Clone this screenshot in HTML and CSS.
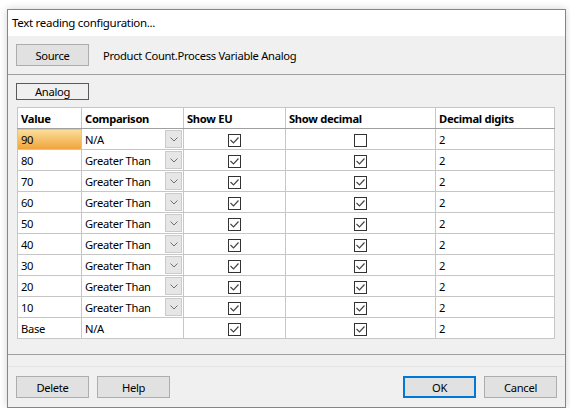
FILE: index.html
```html
<!DOCTYPE html>
<html lang="en">
<head>
  <meta charset="UTF-8" />
  <title>Text reading configuration...</title>
  <link rel="stylesheet" href="styles.css">
</head>
<body>

<div class="window">
  <div class="titlebar">Text reading configuration...</div>

  <div class="source-bar">
    <button class="btn">Source</button>
    <span class="source-name">Product Count.Process Variable Analog</span>
  </div>

  <div class="content">
    <button class="tab-btn">Analog</button>

    <table class="grid">
      <colgroup>
        <col class="c-value">
        <col class="c-comp">
        <col class="c-eu">
        <col class="c-dec">
        <col class="c-digits">
      </colgroup>
      <thead>
        <tr>
          <th>Value</th>
          <th>Comparison</th>
          <th>Show EU</th>
          <th>Show decimal</th>
          <th>Decimal digits</th>
        </tr>
      </thead>
      <tbody>
        <tr>
          <td class="selected">90</td>
          <td><div class="combo"><span>N/A</span><span class="drop"><svg width="8" height="5" viewBox="0 0 8 5"><polyline points="0.5,0.5 4,4 7.5,0.5" fill="none" stroke="#707070" stroke-width="1"/></svg></span></div></td>
          <td class="center"><span class="check on"></span></td>
          <td class="center"><span class="check"></span></td>
          <td>2</td>
        </tr>
        <tr>
          <td>80</td>
          <td><div class="combo"><span>Greater Than</span><span class="drop"><svg width="8" height="5" viewBox="0 0 8 5"><polyline points="0.5,0.5 4,4 7.5,0.5" fill="none" stroke="#707070" stroke-width="1"/></svg></span></div></td>
          <td class="center"><span class="check on"></span></td>
          <td class="center"><span class="check on"></span></td>
          <td>2</td>
        </tr>
        <tr>
          <td>70</td>
          <td><div class="combo"><span>Greater Than</span><span class="drop"><svg width="8" height="5" viewBox="0 0 8 5"><polyline points="0.5,0.5 4,4 7.5,0.5" fill="none" stroke="#707070" stroke-width="1"/></svg></span></div></td>
          <td class="center"><span class="check on"></span></td>
          <td class="center"><span class="check on"></span></td>
          <td>2</td>
        </tr>
        <tr>
          <td>60</td>
          <td><div class="combo"><span>Greater Than</span><span class="drop"><svg width="8" height="5" viewBox="0 0 8 5"><polyline points="0.5,0.5 4,4 7.5,0.5" fill="none" stroke="#707070" stroke-width="1"/></svg></span></div></td>
          <td class="center"><span class="check on"></span></td>
          <td class="center"><span class="check on"></span></td>
          <td>2</td>
        </tr>
        <tr>
          <td>50</td>
          <td><div class="combo"><span>Greater Than</span><span class="drop"><svg width="8" height="5" viewBox="0 0 8 5"><polyline points="0.5,0.5 4,4 7.5,0.5" fill="none" stroke="#707070" stroke-width="1"/></svg></span></div></td>
          <td class="center"><span class="check on"></span></td>
          <td class="center"><span class="check on"></span></td>
          <td>2</td>
        </tr>
        <tr>
          <td>40</td>
          <td><div class="combo"><span>Greater Than</span><span class="drop"><svg width="8" height="5" viewBox="0 0 8 5"><polyline points="0.5,0.5 4,4 7.5,0.5" fill="none" stroke="#707070" stroke-width="1"/></svg></span></div></td>
          <td class="center"><span class="check on"></span></td>
          <td class="center"><span class="check on"></span></td>
          <td>2</td>
        </tr>
        <tr>
          <td>30</td>
          <td><div class="combo"><span>Greater Than</span><span class="drop"><svg width="8" height="5" viewBox="0 0 8 5"><polyline points="0.5,0.5 4,4 7.5,0.5" fill="none" stroke="#707070" stroke-width="1"/></svg></span></div></td>
          <td class="center"><span class="check on"></span></td>
          <td class="center"><span class="check on"></span></td>
          <td>2</td>
        </tr>
        <tr>
          <td>20</td>
          <td><div class="combo"><span>Greater Than</span><span class="drop"><svg width="8" height="5" viewBox="0 0 8 5"><polyline points="0.5,0.5 4,4 7.5,0.5" fill="none" stroke="#707070" stroke-width="1"/></svg></span></div></td>
          <td class="center"><span class="check on"></span></td>
          <td class="center"><span class="check on"></span></td>
          <td>2</td>
        </tr>
        <tr>
          <td>10</td>
          <td><div class="combo"><span>Greater Than</span><span class="drop"><svg width="8" height="5" viewBox="0 0 8 5"><polyline points="0.5,0.5 4,4 7.5,0.5" fill="none" stroke="#707070" stroke-width="1"/></svg></span></div></td>
          <td class="center"><span class="check on"></span></td>
          <td class="center"><span class="check on"></span></td>
          <td>2</td>
        </tr>
        <tr>
          <td>Base</td>
          <td>N/A</td>
          <td class="center"><span class="check on"></span></td>
          <td class="center"><span class="check on"></span></td>
          <td>2</td>
        </tr>
      </tbody>
    </table>
  </div>

  <div class="footer">
    <div class="btn-group">
      <button class="btn">Delete</button>
      <button class="btn">Help</button>
    </div>
    <div class="btn-group">
      <button class="btn default">OK</button>
      <button class="btn">Cancel</button>
    </div>
  </div>
</div>

</body>
</html>
```

FILE: styles.css
```css
:root {
  --face: #f0f0f0;
  --btn-face: #e1e1e1;
  --btn-border: #adadad;
  --grid-line: #c6c6c6;
  --grid-edge: #a0a0a0;
  --win-border: #5b8fc4;
}

body {
  margin: 0;
  background: #fff;
  font-family: "Segoe UI", "Noto Sans", sans-serif;
  font-size: 11.2px;
  letter-spacing: -0.3px;
  color: #000;
}

.window {
  margin: 9px 0 0 7px;
  width: 557px;
  height: 397px;
  border: 1px solid var(--win-border);
  background: var(--face);
  box-shadow: 0 0 8px rgba(0, 0, 0, 0.18);
  display: flex;
  flex-direction: column;
}

.titlebar {
  height: 26px;
  line-height: 25px;
  padding-left: 4px;
  background: #fff;
  font-size: 11.5px;
}

.source-bar {
  height: 38px;
  display: flex;
  align-items: center;
  gap: 14px;
  padding: 0 8px;
  border-bottom: 1px solid var(--grid-edge);
}

.btn {
  font: inherit;
  letter-spacing: inherit;
  color: #000;
  width: 73px;
  height: 22px;
  padding: 0;
  background: var(--btn-face);
  border: 1px solid var(--btn-border);
}

.btn.default {
  border: 2px solid #0078d7;
}

.content {
  padding: 8px 0 0 8px;
  height: 271px;
  border-bottom: 1px solid var(--grid-edge);
}

.tab-btn {
  display: block;
  font: inherit;
  letter-spacing: inherit;
  color: #000;
  width: 73px;
  height: 17px;
  line-height: 13px;
  padding: 0;
  background: #f0f0f0;
  border: 1px solid #5a5a5a;
  margin-bottom: 7px;
}

.grid {
  margin-left: 1px;
  border-collapse: collapse;
  table-layout: fixed;
  width: 537px;
  background: #fff;
  border: 1px solid var(--grid-edge);
}

.c-value { width: 64px; }
.c-comp { width: 102px; }
.c-eu { width: 102px; }
.c-dec { width: 150px; }
.c-digits { width: 119px; }

.grid th,
.grid td {
  height: 20px;
  padding: 0 0 0 3px;
  border: 1px solid var(--grid-line);
  text-align: left;
  white-space: nowrap;
}

.grid th {
  font-weight: bold;
  border-bottom: 1px solid var(--grid-edge);
}

.grid td.center {
  text-align: center;
  padding: 0;
}

.grid td.selected {
  background: linear-gradient(to bottom, #fbdf9c, #f1a33a);
}

.combo {
  display: flex;
  align-items: center;
  justify-content: space-between;
  padding-right: 1px;
}

.drop {
  width: 15px;
  height: 16px;
  background: #e6e6e6;
  border: 1px solid #cacaca;
  display: flex;
  align-items: center;
  justify-content: center;
}

.check {
  display: inline-block;
  vertical-align: middle;
  width: 11px;
  height: 11px;
  border: 1px solid #333;
  background: #fff;
}

.check.on {
  background-image: url("data:image/svg+xml,%3Csvg xmlns='http://www.w3.org/2000/svg' width='11' height='11' viewBox='0 0 11 11'%3E%3Cpolyline points='1.5,5 4.5,8 9.5,2.5' fill='none' stroke='%23444' stroke-width='1.2'/%3E%3C/svg%3E");
}

.footer {
  flex: 1;
  display: flex;
  justify-content: space-between;
  align-items: flex-start;
  padding: 9px 8px 0;
  border-top: 1px solid #e3e3e3;
  margin-top: 11px;
}

.btn-group {
  display: flex;
  gap: 8px;
}
```
